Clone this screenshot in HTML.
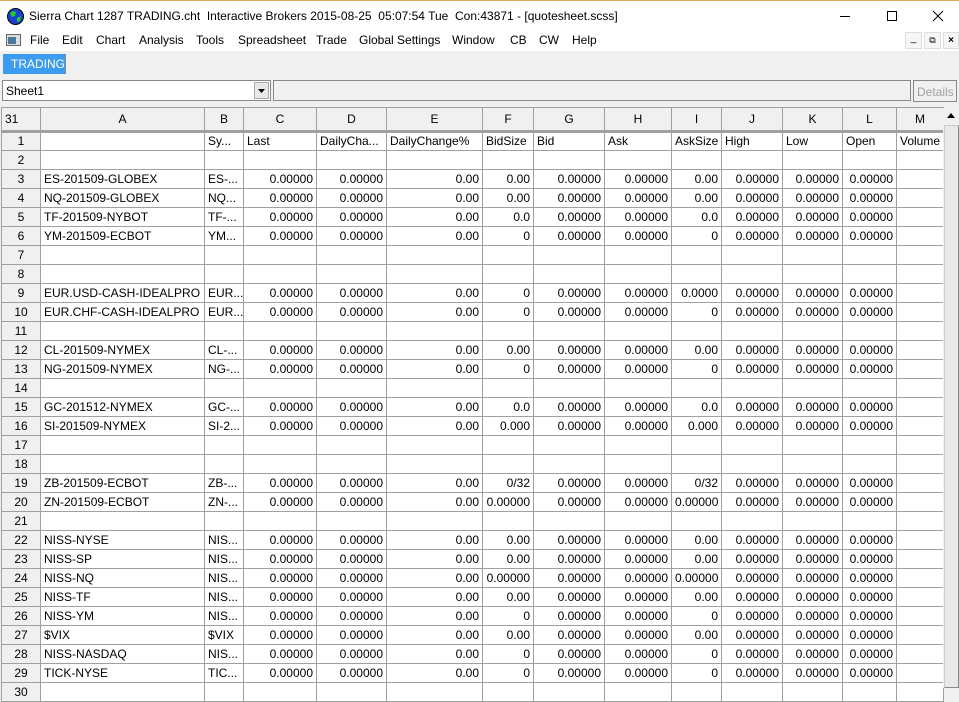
<!DOCTYPE html>
<html><head><meta charset="utf-8"><style>
*{margin:0;padding:0;box-sizing:border-box}
body{width:959px;height:701px;overflow:hidden;background:#f0f0f0;font-family:"Liberation Sans",sans-serif;font-size:12px;color:#000;position:relative}
#title{position:absolute;left:0;top:0;width:959px;height:31px;background:#fff;border-top:1px solid #e8a850}
#title .t{position:absolute;left:29px;top:8px;font-size:12px}
#menu{position:absolute;left:0;top:31px;width:959px;height:20px;background:#fff}
#menu span{position:absolute;top:2px}
#tab{position:absolute;left:3px;top:54px;width:63px;height:20px;background:#3c9cf0;color:#fff;border-right:1px solid #888;padding:3px 0 0 8px}
#combo{position:absolute;left:2px;top:80px;width:269px;height:21px;background:#fff;border:1px solid #888}
#combo .dd{position:absolute;right:1px;top:1px;width:15px;height:17px;background:#e8e8e8;border:1px solid #aaa}
#bar{position:absolute;left:273px;top:80px;width:638px;height:21px;border:1px solid #888;background:#f0f0f0}
#det{position:absolute;left:913px;top:80px;width:44px;height:22px;border:1px solid #888;color:#a0a0a0;padding:4px 0 0 3px;background:#f0f0f0}
table{position:absolute;left:1px;top:107px;width:942px;border-collapse:collapse;table-layout:fixed;background:#fff}
td{border:1px solid #a0a0a0;height:19px;padding:0 3px;white-space:nowrap;overflow:hidden;text-align:right;line-height:17px}
td.l{text-align:left}
td.h{background:#f0f0f0;text-align:center}
tr.hd td{background:#f0f0f0;text-align:center;height:24px;border-bottom:3px solid #a0a0a0}
#sb{position:absolute;left:943px;top:108px;width:16px;height:580px;background:#f0f0f0}
#sb .up{position:absolute;left:0;top:0;width:16px;height:16px;background:#f0f0f0}
#sb .th{position:absolute;left:1px;top:17px;width:15px;height:563px;background:#e8e8e8;border:1px solid #ccc;border-right-color:#888;border-bottom-color:#888}
</style></head><body>
<div id="title">
<svg style="position:absolute;left:7px;top:7px" width="17" height="17"><circle cx="8.5" cy="8.5" r="8" fill="#1a3fd0" stroke="#000"/><path d="M3 5 Q6 2 9 4 L8 8 L5 9 Z M10 10 L14 8 L13 13 L10 14 Z" fill="#2c2"/></svg>
<span class="t">Sierra Chart 1287 TRADING.cht &nbsp;Interactive Brokers 2015-08-25 &nbsp;05:07:54 Tue &nbsp;Con:43871 - [quotesheet.scss]</span>
<svg style="position:absolute;left:835px;top:8px" width="112" height="14"><line x1="5" y1="7.5" x2="15" y2="7.5" stroke="#000"/><rect x="52.5" y="2.5" width="9" height="9" fill="none" stroke="#000"/><path d="M98 2 L108 12 M108 2 L98 12" stroke="#000"/></svg>
</div>
<div id="menu">
<svg style="position:absolute;left:6px;top:3px" width="16" height="13"><rect x="0.5" y="0.5" width="14" height="11" fill="#ddd" stroke="#666"/><rect x="2" y="3" width="8" height="7" fill="#4a7a9a"/></svg>
<span style="left:30px">File</span><span style="left:62px">Edit</span><span style="left:96px">Chart</span><span style="left:139px">Analysis</span><span style="left:196px">Tools</span><span style="left:238px">Spreadsheet</span><span style="left:316px">Trade</span><span style="left:359px">Global Settings</span><span style="left:452px">Window</span><span style="left:510px">CB</span><span style="left:539px">CW</span><span style="left:572px">Help</span>
<div style="position:absolute;left:905px;top:1px;width:17px;height:17px;border:1px solid #ddd;background:#f6f6f6;font-size:10px;text-align:center">_</div>
<div style="position:absolute;left:924px;top:1px;width:17px;height:17px;border:1px solid #ddd;background:#f6f6f6;font-size:9px;text-align:center;line-height:15px">⧉</div>
<div style="position:absolute;left:943px;top:1px;width:16px;height:17px;border:1px solid #ddd;background:#f6f6f6;font-size:10px;font-weight:bold;text-align:center;line-height:15px">×</div>
</div>
<div id="tab">TRADING</div>
<div id="combo"><span style="position:absolute;left:3px;top:3px">Sheet1</span><div class="dd"><svg width="13" height="15"><path d="M3 6 L10 6 L6.5 10 Z" fill="#000"/></svg></div></div>
<div id="bar"></div>
<div id="det">Details</div>
<table>
<colgroup><col style="width:39px"><col style="width:164px"><col style="width:39px"><col style="width:73px"><col style="width:70px"><col style="width:96px"><col style="width:51px"><col style="width:71px"><col style="width:67px"><col style="width:50px"><col style="width:61px"><col style="width:60px"><col style="width:54px"><col style="width:47px"></colgroup>
<tr class="hd"><td style="text-align:left">31</td><td>A</td><td>B</td><td>C</td><td>D</td><td>E</td><td>F</td><td>G</td><td>H</td><td>I</td><td>J</td><td>K</td><td>L</td><td>M</td></tr>
<tr><td class="h">1</td><td></td><td class="l">Sy...</td><td class="l">Last</td><td class="l">DailyCha...</td><td class="l">DailyChange%</td><td class="l">BidSize</td><td class="l">Bid</td><td class="l">Ask</td><td class="l">AskSize</td><td class="l">High</td><td class="l">Low</td><td class="l">Open</td><td class="l">Volume</td></tr>
<tr><td class="h">2</td><td></td><td></td><td></td><td></td><td></td><td></td><td></td><td></td><td></td><td></td><td></td><td></td><td></td></tr>
<tr><td class="h">3</td><td class="l">ES-201509-GLOBEX</td><td class="l">ES-...</td><td>0.00000</td><td>0.00000</td><td>0.00</td><td>0.00</td><td>0.00000</td><td>0.00000</td><td>0.00</td><td>0.00000</td><td>0.00000</td><td>0.00000</td><td></td></tr>
<tr><td class="h">4</td><td class="l">NQ-201509-GLOBEX</td><td class="l">NQ...</td><td>0.00000</td><td>0.00000</td><td>0.00</td><td>0.00</td><td>0.00000</td><td>0.00000</td><td>0.00</td><td>0.00000</td><td>0.00000</td><td>0.00000</td><td></td></tr>
<tr><td class="h">5</td><td class="l">TF-201509-NYBOT</td><td class="l">TF-...</td><td>0.00000</td><td>0.00000</td><td>0.00</td><td>0.0</td><td>0.00000</td><td>0.00000</td><td>0.0</td><td>0.00000</td><td>0.00000</td><td>0.00000</td><td></td></tr>
<tr><td class="h">6</td><td class="l">YM-201509-ECBOT</td><td class="l">YM...</td><td>0.00000</td><td>0.00000</td><td>0.00</td><td>0</td><td>0.00000</td><td>0.00000</td><td>0</td><td>0.00000</td><td>0.00000</td><td>0.00000</td><td></td></tr>
<tr><td class="h">7</td><td></td><td></td><td></td><td></td><td></td><td></td><td></td><td></td><td></td><td></td><td></td><td></td><td></td></tr>
<tr><td class="h">8</td><td></td><td></td><td></td><td></td><td></td><td></td><td></td><td></td><td></td><td></td><td></td><td></td><td></td></tr>
<tr><td class="h">9</td><td class="l">EUR.USD-CASH-IDEALPRO</td><td class="l">EUR...</td><td>0.00000</td><td>0.00000</td><td>0.00</td><td>0</td><td>0.00000</td><td>0.00000</td><td>0.0000</td><td>0.00000</td><td>0.00000</td><td>0.00000</td><td></td></tr>
<tr><td class="h">10</td><td class="l">EUR.CHF-CASH-IDEALPRO</td><td class="l">EUR...</td><td>0.00000</td><td>0.00000</td><td>0.00</td><td>0</td><td>0.00000</td><td>0.00000</td><td>0</td><td>0.00000</td><td>0.00000</td><td>0.00000</td><td></td></tr>
<tr><td class="h">11</td><td></td><td></td><td></td><td></td><td></td><td></td><td></td><td></td><td></td><td></td><td></td><td></td><td></td></tr>
<tr><td class="h">12</td><td class="l">CL-201509-NYMEX</td><td class="l">CL-...</td><td>0.00000</td><td>0.00000</td><td>0.00</td><td>0.00</td><td>0.00000</td><td>0.00000</td><td>0.00</td><td>0.00000</td><td>0.00000</td><td>0.00000</td><td></td></tr>
<tr><td class="h">13</td><td class="l">NG-201509-NYMEX</td><td class="l">NG-...</td><td>0.00000</td><td>0.00000</td><td>0.00</td><td>0</td><td>0.00000</td><td>0.00000</td><td>0</td><td>0.00000</td><td>0.00000</td><td>0.00000</td><td></td></tr>
<tr><td class="h">14</td><td></td><td></td><td></td><td></td><td></td><td></td><td></td><td></td><td></td><td></td><td></td><td></td><td></td></tr>
<tr><td class="h">15</td><td class="l">GC-201512-NYMEX</td><td class="l">GC-...</td><td>0.00000</td><td>0.00000</td><td>0.00</td><td>0.0</td><td>0.00000</td><td>0.00000</td><td>0.0</td><td>0.00000</td><td>0.00000</td><td>0.00000</td><td></td></tr>
<tr><td class="h">16</td><td class="l">SI-201509-NYMEX</td><td class="l">SI-2...</td><td>0.00000</td><td>0.00000</td><td>0.00</td><td>0.000</td><td>0.00000</td><td>0.00000</td><td>0.000</td><td>0.00000</td><td>0.00000</td><td>0.00000</td><td></td></tr>
<tr><td class="h">17</td><td></td><td></td><td></td><td></td><td></td><td></td><td></td><td></td><td></td><td></td><td></td><td></td><td></td></tr>
<tr><td class="h">18</td><td></td><td></td><td></td><td></td><td></td><td></td><td></td><td></td><td></td><td></td><td></td><td></td><td></td></tr>
<tr><td class="h">19</td><td class="l">ZB-201509-ECBOT</td><td class="l">ZB-...</td><td>0.00000</td><td>0.00000</td><td>0.00</td><td>0/32</td><td>0.00000</td><td>0.00000</td><td>0/32</td><td>0.00000</td><td>0.00000</td><td>0.00000</td><td></td></tr>
<tr><td class="h">20</td><td class="l">ZN-201509-ECBOT</td><td class="l">ZN-...</td><td>0.00000</td><td>0.00000</td><td>0.00</td><td>0.00000</td><td>0.00000</td><td>0.00000</td><td>0.00000</td><td>0.00000</td><td>0.00000</td><td>0.00000</td><td></td></tr>
<tr><td class="h">21</td><td></td><td></td><td></td><td></td><td></td><td></td><td></td><td></td><td></td><td></td><td></td><td></td><td></td></tr>
<tr><td class="h">22</td><td class="l">NISS-NYSE</td><td class="l">NIS...</td><td>0.00000</td><td>0.00000</td><td>0.00</td><td>0.00</td><td>0.00000</td><td>0.00000</td><td>0.00</td><td>0.00000</td><td>0.00000</td><td>0.00000</td><td></td></tr>
<tr><td class="h">23</td><td class="l">NISS-SP</td><td class="l">NIS...</td><td>0.00000</td><td>0.00000</td><td>0.00</td><td>0.00</td><td>0.00000</td><td>0.00000</td><td>0.00</td><td>0.00000</td><td>0.00000</td><td>0.00000</td><td></td></tr>
<tr><td class="h">24</td><td class="l">NISS-NQ</td><td class="l">NIS...</td><td>0.00000</td><td>0.00000</td><td>0.00</td><td>0.00000</td><td>0.00000</td><td>0.00000</td><td>0.00000</td><td>0.00000</td><td>0.00000</td><td>0.00000</td><td></td></tr>
<tr><td class="h">25</td><td class="l">NISS-TF</td><td class="l">NIS...</td><td>0.00000</td><td>0.00000</td><td>0.00</td><td>0.00</td><td>0.00000</td><td>0.00000</td><td>0.00</td><td>0.00000</td><td>0.00000</td><td>0.00000</td><td></td></tr>
<tr><td class="h">26</td><td class="l">NISS-YM</td><td class="l">NIS...</td><td>0.00000</td><td>0.00000</td><td>0.00</td><td>0</td><td>0.00000</td><td>0.00000</td><td>0</td><td>0.00000</td><td>0.00000</td><td>0.00000</td><td></td></tr>
<tr><td class="h">27</td><td class="l">$VIX</td><td class="l">$VIX</td><td>0.00000</td><td>0.00000</td><td>0.00</td><td>0.00</td><td>0.00000</td><td>0.00000</td><td>0.00</td><td>0.00000</td><td>0.00000</td><td>0.00000</td><td></td></tr>
<tr><td class="h">28</td><td class="l">NISS-NASDAQ</td><td class="l">NIS...</td><td>0.00000</td><td>0.00000</td><td>0.00</td><td>0</td><td>0.00000</td><td>0.00000</td><td>0</td><td>0.00000</td><td>0.00000</td><td>0.00000</td><td></td></tr>
<tr><td class="h">29</td><td class="l">TICK-NYSE</td><td class="l">TIC...</td><td>0.00000</td><td>0.00000</td><td>0.00</td><td>0</td><td>0.00000</td><td>0.00000</td><td>0</td><td>0.00000</td><td>0.00000</td><td>0.00000</td><td></td></tr>
<tr><td class="h">30</td><td></td><td></td><td></td><td></td><td></td><td></td><td></td><td></td><td></td><td></td><td></td><td></td><td></td></tr>
</table>
<div id="sb"><div class="up"><svg width="16" height="16"><path d="M4 10 L12 10 L8 5 Z" fill="#000"/></svg></div><div class="th"></div></div>
</body></html>
